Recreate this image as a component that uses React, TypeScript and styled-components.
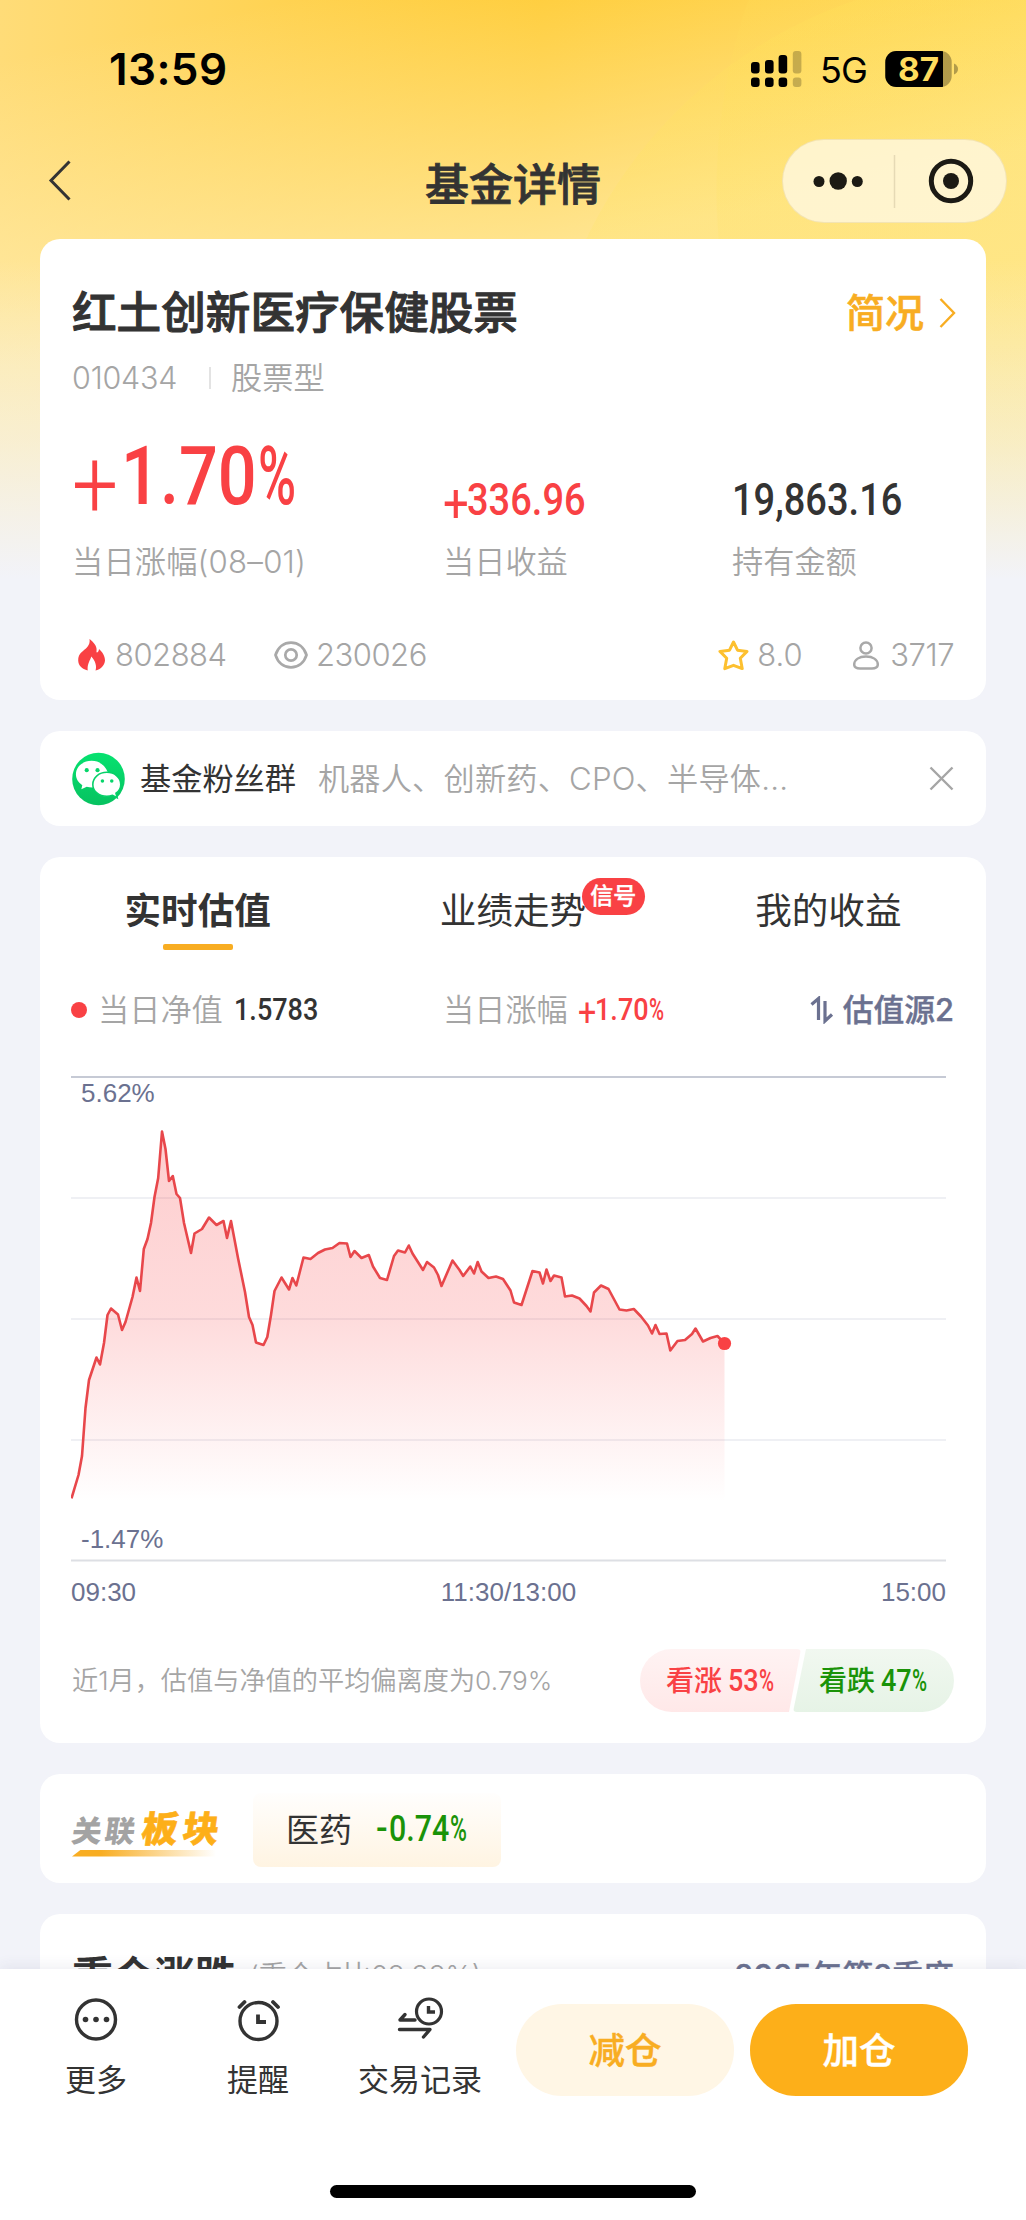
import React from "react";
import styled, { createGlobalStyle, css } from "styled-components";

const GlobalStyle = createGlobalStyle`
  * { box-sizing: border-box; }
  body { margin: 0; font-family: Inter, "Noto Sans CJK SC", sans-serif; color: #333; }
  svg { display: block; flex: none; }
`;

const c = {
  red: "#f94144",
  line: "#e8474b",
  grey: "#a5a5a5",
  slate: "#6b7190",
  amber: "#f8ad22",
  orange: "#fdaf19",
  green: "#1a9308",
  ink: "#333333",
};

const Page = styled.div`
  width: 1026px;
  height: 2220px;
  display: flex;
  flex-direction: column;
  overflow: hidden;
  background-color: #f2f3f9;
  background-image:
    linear-gradient(180deg, rgba(242, 243, 249, 0) 0px, rgba(242, 243, 249, 0) 260px, rgba(242, 243, 249, 0.5) 440px, #f2f3f9 580px),
    radial-gradient(circle 465px at 1005px 440px, rgba(255, 230, 90, 0.19) 99.8%, transparent 100%),
    radial-gradient(circle 585px at 1301px 190px, rgba(255, 224, 90, 0.15) 99.8%, transparent 100%),
    linear-gradient(168deg, rgba(255, 240, 190, 0) 60px, rgba(255, 240, 185, 0.7) 360px, rgba(255, 240, 190, 0.8) 600px),
    linear-gradient(90deg, #ffdc78 0px, #ffca30 540px, #ffcc32 1026px);
`;

const StatusBar = styled.header`
  height: 116px;
  flex: none;
  display: flex;
  align-items: center;
  padding: 21px 67px 0 109px;
  color: #000;
`;

const Clock = styled.div`
  font-size: 44px;
  font-weight: 600;
  line-height: 44px;
  letter-spacing: 0.4px;
  margin-right: auto;
`;

const Network = styled.div`
  font-size: 36px;
  line-height: 36px;
  margin: 3px 18px 0 18px;
  width: 47px;
  letter-spacing: -0.8px;
`;

const NavBar = styled.nav`
  height: 123px;
  flex: none;
  display: grid;
  grid-template-columns: 244px 1fr 244px;
  padding: 0 19px 0 19px;
`;

const NavBack = styled.div`
  padding: 44px 0 0 29px;
`;

const NavTitle = styled.h1`
  margin: 0;
  font-size: 44px;
  font-weight: 500;
  line-height: 138px;
  text-align: center;
  -webkit-text-stroke: 0.8px currentColor;
`;

const Capsule = styled.div`
  justify-self: end;
  margin-top: 23px;
  width: 225px;
  height: 84px;
  border-radius: 42px;
  border: 1px solid rgba(200, 170, 80, 0.22);
  background: rgba(255, 249, 228, 0.78);
  display: flex;
  align-items: center;
`;

const Content = styled.main`
  flex: none;
  height: 1730px;
  overflow: hidden;
  padding: 0 40px;
  display: flex;
  flex-direction: column;
  gap: 31px;
`;

const Card = styled.section<{ $h: number }>`
  flex: none;
  height: ${(p) => p.$h}px;
  border-radius: 20px;
  background: #fff;
  padding: 0 32px;
`;

const Row = styled.div<{ $h: number; $mt?: number }>`
  height: ${(p) => p.$h}px;
  margin-top: ${(p) => p.$mt ?? 0}px;
  display: flex;
  align-items: center;
`;

const Spacer = styled.div`
  flex: 1;
`;

const FundName = styled.h2`
  margin: 0;
  font-size: 44.6px;
  line-height: 64px;
  font-weight: 500;
  white-space: nowrap;
  -webkit-text-stroke: 1px currentColor;
`;

const ProfileLink = styled.div`
  display: flex;
  align-items: center;
  gap: 15px;
  margin-right: -2px;
  font-size: 39px;
  line-height: 64px;
  font-weight: 500;
  color: ${c.amber};
  -webkit-text-stroke: 0.6px currentColor;
`;

const Muted = styled.span<{ $size?: number; $w?: number; $ls?: number }>`
  color: ${c.grey};
  font-size: ${(p) => p.$size ?? 31.2}px;
  line-height: 32px;
  font-weight: 350;
  white-space: nowrap;
  letter-spacing: ${(p) => p.$ls ?? 0}px;
  ${(p) => p.$w && css`width: ${p.$w}px;`}
`;

const Divider = styled.i`
  width: 2px;
  height: 22px;
  margin: 0 20px 0 32px;
  background: #e3e3e3;
`;

const Metrics = styled.div`
  margin-top: 42px;
  display: grid;
  grid-template-columns: 371px 289px 1fr;
`;

const Metric = styled.div`
  display: flex;
  flex-direction: column;
  gap: 20px;
`;

const MetricValue = styled.div<{ $drop: number }>`
  height: 90px;
  display: flex;
  align-items: flex-end;
  padding-bottom: ${(p) => p.$drop}px;
`;

const Figures = styled.span<{ $size: number; $color: string }>`
  display: flex;
  font-family: Roboto, sans-serif;
  font-size: ${(p) => p.$size}px;
  line-height: 0.72em;
  height: 0.72em;
  font-weight: 500;
  color: ${(p) => p.$color};
  white-space: nowrap;
`;

const FigurePart = styled.span<{ $w: number; $sx: number }>`
  flex: none;
  width: ${(p) => p.$w}em;
  transform: scaleX(${(p) => p.$sx});
  transform-origin: left center;
`;

const Sign = styled(FigurePart)<{ $plus: boolean; $thin: boolean }>`
  font-weight: ${(p) => (p.$thin ? 300 : 400)};
  ${(p) =>
    p.$plus
      ? css`
          span {
            display: block;
            font-size: 1.2em;
            line-height: 0.6em;
            transform: translateY(0.083em);
          }
        `
      : css`
          font-weight: 500;
        `}
`;

const GroupName = styled.span`
  font-size: 31.2px;
  line-height: 32px;
  margin: 0 22px 0 15px;
`;

const Tabs = styled.div`
  display: grid;
  grid-template-columns: repeat(3, 1fr);
  margin: 0 -32px;
  height: 106px;
`;

const Tab = styled.div<{ $active?: boolean }>`
  display: flex;
  align-items: center;
  justify-content: center;
  padding-top: 2px;
  font-size: 36.6px;
  line-height: 40px;
  font-weight: ${(p) => (p.$active ? 700 : 400)};
  ${(p) =>
    p.$active &&
    css`
      position: relative;
      &::after {
        content: "";
        position: absolute;
        left: calc(50% - 35px);
        top: 87px;
        width: 70px;
        height: 6px;
        border-radius: 2px;
        background: ${c.amber};
      }
    `}
`;

const TabLabel = styled.span`
  position: relative;
`;

const SignalBadge = styled.span`
  position: absolute;
  left: 142px;
  top: -13px;
  width: 63px;
  height: 37px;
  border-radius: 19px;
  background: ${c.red};
  color: #fff;
  font-size: 23px;
  font-weight: 500;
  line-height: 37px;
  text-align: center;
  -webkit-text-stroke: 0.4px currentColor;
`;

const Dot = styled.i`
  width: 16px;
  height: 16px;
  border-radius: 50%;
  background: ${c.red};
  margin: 0 11px 0 -1px;
`;

const Legend = styled.div<{ $w?: number; $gap: number; $pl?: number }>`
  display: flex;
  align-items: center;
  gap: ${(p) => p.$gap}px;
  padding-left: ${(p) => p.$pl ?? 0}px;
  ${(p) => p.$w && css`width: ${p.$w}px;`}
`;

const Source = styled.div`
  display: flex;
  align-items: center;
  gap: 9px;
  color: ${c.slate};
  font-size: 30.8px;
  line-height: 32px;
  font-weight: 500;
  -webkit-text-stroke: 0.4px currentColor;
`;

const ChartBox = styled.div`
  margin: 46px 0 0 -1px;
  height: 486px;
`;

const Axis = styled.div`
  margin: 15px 8px 0 -1px;
  height: 30px;
  display: grid;
  grid-template-columns: 1fr auto 1fr;
  align-items: center;
  font-family: "Liberation Sans", sans-serif;
  font-size: 26px;
  line-height: 30px;
  color: ${c.slate};
  & > :last-child { text-align: right; }
`;

const Forecast = styled.div`
  display: flex;
`;

const Side = styled.div<{ $up?: boolean }>`
  height: 63px;
  display: flex;
  align-items: center;
  gap: 6px;
  font-size: 28px;
  line-height: 32px;
  font-weight: 500;
  ${(p) =>
    p.$up
      ? css`
          width: 161px;
          padding-left: 26px;
          color: ${c.red};
          border-radius: 32px 4px 4px 32px;
          background: linear-gradient(180deg, #fff3f3, #ffe8e8);
          clip-path: polygon(0 0, 100% 0, 149px 100%, 0 100%);
        `
      : css`
          width: 161px;
          margin-left: -8px;
          padding-left: 26px;
          color: ${c.green};
          border-radius: 4px 32px 32px 4px;
          background: linear-gradient(180deg, #f1f8f0, #e6f3e6);
          clip-path: polygon(13px 0, 100% 0, 100% 100%, 0 100%);
        `}
`;

const SectorLogo = styled.div`
  width: 148px;
  margin-top: 11px;
  display: flex;
  flex-direction: column;
`;

const SectorWords = styled.div`
  display: flex;
  align-items: baseline;
  gap: 4px;
  font-weight: 900;
  white-space: nowrap;
  line-height: 34px;
`;

const Slanted = styled.span<{ $size: number; $color: string; $ls: number; $stroke: number }>`
  font-size: ${(p) => p.$size}px;
  color: ${(p) => p.$color};
  letter-spacing: ${(p) => p.$ls}px;
  transform: skewX(-8deg);
  -webkit-text-stroke: ${(p) => p.$stroke}px currentColor;
`;

const Swoosh = styled.i`
  height: 7px;
  width: 144px;
  margin-top: 2px;
  background: linear-gradient(90deg, ${c.amber} 20%, rgba(248, 173, 34, 0));
  clip-path: polygon(9px 0, 100% 0, 100% 100%, 0 100%);
`;

const SectorTag = styled.div`
  width: 248px;
  height: 74px;
  margin: 2px 0 0 33px;
  padding: 0 0 0 33px;
  border-radius: 8px;
  display: flex;
  align-items: center;
  gap: 24px;
  font-size: 33px;
  line-height: 36px;
  background: linear-gradient(180deg, #fffefd, #fff4e2);
`;

const HoldingsTitle = styled.span`
  font-size: 41px;
  line-height: 44px;
  font-weight: 700;
`;

const Quarter = styled.span`
  font-size: 30.9px;
  line-height: 32px;
  font-weight: 500;
  color: ${c.slate};
  -webkit-text-stroke: 0.4px currentColor;
`;

const Footer = styled.footer`
  flex: 1;
  background: #fff;
  box-shadow: 0 -2px 14px rgba(60, 60, 100, 0.09);
  display: flex;
  flex-direction: column;
  align-items: center;
  z-index: 1;
`;

const Actions = styled.div`
  width: 100%;
  height: 216px;
  padding-left: 15px;
  display: flex;
`;

const Action = styled.div`
  flex: none;
  width: 162px;
  padding-top: 26px;
  display: flex;
  flex-direction: column;
  align-items: center;
  gap: 21px;
  font-size: 31px;
  line-height: 32px;
`;

const TradeButtons = styled.div`
  display: flex;
  gap: 16px;
  margin: 35px 0 0 15px;
`;

const TradeButton = styled.button<{ $solid?: boolean }>`
  flex: none;
  width: 218px;
  height: 92px;
  padding: 0;
  border: 0;
  border-radius: 46px;
  font-family: inherit;
  font-size: 36.5px;
  line-height: 94px;
  font-weight: 500;
  -webkit-text-stroke: 0.4px currentColor;
  color: ${(p) => (p.$solid ? "#fff" : c.amber)};
  background: ${(p) => (p.$solid ? c.orange : "#fff6e5")};
`;

const HomeIndicator = styled.div`
  width: 366px;
  height: 13px;
  border-radius: 7px;
  background: #000;
`;

const DIGIT_EM = 0.566;
const POINT_EM = 0.276;
const BODY_SCALE = 0.845;

/* Condensed number: sign, digits and percent mark are each narrowed on their own. */
const Num = ({ value, size, color = c.ink }: { value: string; size: number; color?: string }) => {
  const sign = /^[+-]/.test(value) ? value[0] : "";
  const percent = value.endsWith("%");
  const body = value.slice(sign ? 1 : 0, percent ? -1 : undefined);
  const em = [...body].reduce((sum, ch) => sum + (/\d/.test(ch) ? DIGIT_EM : POINT_EM), 0);
  return (
    <Figures $size={size} $color={color}>
      {sign && (
        <Sign $w={sign === "+" ? (size > 60 ? 0.61 : 0.54) : 0.37} $sx={sign === "+" ? 0.84 : 0.95} $plus={sign === "+"} $thin={size > 60}>
          <span>{sign}</span>
        </Sign>
      )}
      <FigurePart $w={em * BODY_SCALE + 0.02} $sx={BODY_SCALE}>{body}</FigurePart>
      {percent && <FigurePart $w={0.47} $sx={0.64}>%</FigurePart>}
    </Figures>
  );
};

const SignalIcon = () => (
  <svg width="52" height="38" viewBox="750 49 52 38">
    <g fill="#000">
      <rect x="751" y="61" width="8.6" height="11.5" rx="3" />
      <rect x="765" y="59" width="8.6" height="13.5" rx="3" />
      <rect x="778.6" y="54" width="8.6" height="18.5" rx="3" />
      <rect x="751" y="76.5" width="8.6" height="9.5" rx="3" />
      <rect x="765" y="76.5" width="8.6" height="9.5" rx="3" />
      <rect x="778.6" y="76.5" width="8.6" height="9.5" rx="3" />
      <g opacity="0.22">
        <rect x="792.8" y="50" width="8.6" height="22.5" rx="3" />
        <rect x="792.8" y="76.5" width="8.6" height="9.5" rx="3" />
      </g>
    </g>
  </svg>
);

const BatteryIcon = () => (
  <svg width="74" height="38" viewBox="884 49 74 38">
    <clipPath id="charge"><rect x="884" y="49" width="58" height="38" /></clipPath>
    <rect x="884.3" y="50" width="66.4" height="36" rx="11" fill="#000" opacity="0.3" />
    <rect x="884.3" y="50" width="66.4" height="36" rx="11" fill="#000" clipPath="url(#charge)" />
    <path d="M953 62.5 Q957 64.5 957 68 Q957 71.5 953 73.5 Z" fill="#000" opacity="0.3" />
    <text x="917.5" y="80" textAnchor="middle" fontFamily="Inter, sans-serif" fontWeight="700" fontSize="33" textLength="41" lengthAdjust="spacingAndGlyphs" fill="#ffdc5e">87</text>
  </svg>
);

const points: [number, number][] = [
  [71.5, 1498.5], [78.5, 1475], [82, 1456], [85.5, 1408], [89, 1380], [96.5, 1357.5], [100, 1364.5], [104, 1343],
  [107.5, 1315], [111, 1308.5], [118, 1314.5], [122, 1330], [125.5, 1322], [132.5, 1297], [136.5, 1277.5],
  [140, 1291], [143.8, 1249], [147.5, 1239], [151, 1223], [154.5, 1197], [158.2, 1178], [162, 1131.5], [165.5, 1149],
  [169, 1181], [172.8, 1176], [176.5, 1194], [180, 1198], [184, 1223], [191, 1253], [194.5, 1233.5], [202, 1229],
  [209, 1217.5], [216.5, 1225], [223.5, 1221], [227, 1238], [231, 1221], [238, 1258], [245, 1292], [249, 1317],
  [252.5, 1325], [256, 1342.5], [263.5, 1345], [267.3, 1337], [271, 1315], [274.5, 1291], [281.5, 1277.5],
  [289, 1289.5], [292.5, 1278], [296.3, 1285.5], [303.5, 1257.5], [310.5, 1259], [318, 1253], [325, 1249.5],
  [332.5, 1248], [339.5, 1243], [347, 1243.5], [350.5, 1257], [354.5, 1251], [361.5, 1258], [368.8, 1255],
  [373, 1266.5], [380, 1278], [387, 1280], [394, 1256], [398, 1250.5], [405, 1252.5], [408.8, 1245.5], [412.5, 1253.5],
  [423, 1270], [427, 1262], [434, 1267.5], [438, 1275], [441.5, 1286], [452.5, 1260.5], [459.5, 1270], [463.2, 1276],
  [470.3, 1266.5], [474, 1273.5], [477.7, 1262], [481.5, 1271.5], [488.5, 1278], [496, 1276.5], [503, 1279],
  [510.5, 1290.5], [514, 1302.5], [521.5, 1305], [532.5, 1271], [539.5, 1272.5], [543, 1283.5], [546.5, 1269.5],
  [550.5, 1281], [554, 1275.5], [561.5, 1277.5], [565, 1296.5], [572, 1295.5], [579.5, 1298.5], [586.5, 1306],
  [590.5, 1311.5], [594, 1292.5], [601, 1285.5], [608.5, 1289], [619.5, 1309.5], [626.5, 1310.5], [633.8, 1309],
  [641, 1316.5], [648, 1325.5], [652, 1333.5], [655.5, 1325], [659.5, 1334], [666.5, 1333.5], [670.3, 1350.5],
  [677.5, 1341], [685, 1340], [692, 1334], [695.5, 1328.5], [703, 1341.5], [710.5, 1338], [717.5, 1336], [724.5, 1343.5],
];

const Chart = () => {
  const path = points.map(([x, y], i) => `${i ? "L" : "M"}${x} ${y}`).join("");
  return (
    <svg width="876" height="486" viewBox="71 1076 876 486" fontFamily="'Liberation Sans', sans-serif" fontSize="26" fill={c.slate}>
      <defs>
        <linearGradient id="area" gradientUnits="userSpaceOnUse" x1="0" y1="1131" x2="0" y2="1502">
          <stop offset="0" stopColor="#f94144" stopOpacity="0.26" />
          <stop offset="0.5" stopColor="#f94144" stopOpacity="0.19" />
          <stop offset="1" stopColor="#f94144" stopOpacity="0" />
        </linearGradient>
      </defs>
      <g strokeWidth="2">
        <path d="M71 1077H946" stroke="#c6cad5" />
        <path d="M71 1198H946M71 1319H946M71 1440H946" stroke="#eff0f4" />
        <path d="M71 1560.5H946" stroke="#dddfe4" />
      </g>
      <path d={`${path}V1502H71.5Z`} fill="url(#area)" />
      <path d={path} fill="none" stroke={c.line} strokeWidth="2.6" strokeLinejoin="round" />
      <circle cx="724.5" cy="1343.5" r="6.6" fill={c.red} />
      <text x="81" y="1102">5.62%</text>
      <text x="81" y="1547.5">-1.47%</text>
    </svg>
  );
};

const FlameIcon = () => (
  <svg width="27" height="32" viewBox="0 0 27 32">
    <path fill={c.red} d="M11.5 0C14 2 18 5.5 18.5 9.5C18.8 11.5 18.2 13 18.8 13.4C20 13.8 21 11.5 21 10C24.5 13 27 17 27 21.5C26.7 26.5 22.5 30.5 17.5 31.5C19 27.5 17.5 22 13.3 17.5C12.5 21 9 24.5 9.7 31.5C4 30 .3 26.5 .2 21.5C0 14 5.5 12.5 9.5 7.8C11.3 5.5 12 3 11.5 0Z" />
  </svg>
);

const EyeIcon = () => (
  <svg width="34" height="28" viewBox="0 0 34 28" fill="none" stroke="#a9a9a9" strokeWidth="2.7">
    <path d="M1.5 14C4 6 10 1.6 17 1.6S30 6 32.5 14C30 22 24 26.4 17 26.4S4 22 1.5 14Z" />
    <circle cx="17" cy="14" r="5.7" />
  </svg>
);

const StarIcon = () => (
  <svg width="31" height="31" viewBox="0 0 31 31" fill="none" stroke="#fdc02f" strokeWidth="3" strokeLinejoin="round">
    <path d="M15.5 2L19.5 10.2L29 11.4L22.3 18.2L24.2 28.6L15.5 25.3L6.8 28.6L8.7 18.2L2 11.4L11.5 10.2Z" />
  </svg>
);

const PersonIcon = () => (
  <svg width="26" height="29" viewBox="0 0 26 29" fill="none" stroke="#a9a9a9" strokeWidth="2.5">
    <circle cx="13" cy="7" r="5.6" />
    <path d="M7 27.5C2.5 27.5 1.2 25.8 1.2 23.5C1.5 18.5 6 15.6 13 15.6S24.5 18.5 24.8 23.5C24.8 25.8 23.5 27.5 19 27.5Z" />
  </svg>
);

const WechatIcon = () => (
  <svg width="53" height="54" viewBox="0 0 54 54">
    <defs>
      <linearGradient id="wx" x1="0" y1="0" x2="0" y2="1">
        <stop offset="0" stopColor="#06e270" />
        <stop offset="1" stopColor="#07c260" />
      </linearGradient>
    </defs>
    <circle cx="27" cy="27" r="26.8" fill="url(#wx)" />
    <path fill="#fff" d="M20 8.5C11 8.5 4 14.5 4 22.2C4 27 6.5 30.5 10.5 33.3L9.5 37.5L15 34.8Q18 35.7 22 35.5L36.5 20C34 13.5 28 8.5 20 8.5Z" />
    <path fill="#fff" stroke="#06d068" strokeWidth="1.6" d="M35.5 20.2C27.5 20.2 21.2 25.6 21.2 32.5S27.5 44.6 35.5 44.6Q38.5 44.6 41.3 43.6L46 46L44.8 41.5C48 39.2 49.7 36 49.7 32.5C49.7 25.6 43.5 20.2 35.5 20.2Z" />
    <g fill="#06d56a">
      <circle cx="15" cy="18" r="2.1" />
      <circle cx="26" cy="18" r="2.1" />
      <circle cx="31" cy="29" r="1.8" />
      <circle cx="40.5" cy="29" r="1.8" />
    </g>
  </svg>
);

const SwapIcon = () => (
  <svg width="24" height="28" viewBox="0 0 24 28" fill="none" stroke={c.slate} strokeWidth="3.2">
    <path d="M1.5 8.5L8.5 2.5V24" />
    <path d="M15 5V25L22 18.5" />
  </svg>
);

const MoreIcon = () => (
  <svg width="48" height="48" viewBox="0 0 48 48">
    <circle cx="24" cy="24.5" r="19.5" fill="none" stroke={c.ink} strokeWidth="3.4" />
    <g fill={c.ink}>
      <circle cx="13.5" cy="24.5" r="2.8" />
      <circle cx="24" cy="24.5" r="2.8" />
      <circle cx="34.5" cy="24.5" r="2.8" />
    </g>
  </svg>
);

const AlarmIcon = () => (
  <svg width="48" height="48" viewBox="0 0 48 48" fill="none" stroke={c.ink} strokeWidth="3.4" strokeLinecap="round" strokeLinejoin="round">
    <circle cx="24.5" cy="26" r="18.5" />
    <path d="M5.5 12L10.5 7M39 7L44 12" strokeWidth="3.8" />
    <path d="M24 19.5V27H32" strokeWidth="3.8" strokeLinecap="butt" strokeLinejoin="miter" />
  </svg>
);

const TradeIcon = () => (
  <svg width="48" height="48" viewBox="0 0 48 48" fill="none" stroke={c.ink} strokeWidth="3.4" strokeLinecap="round" strokeLinejoin="round">
    <circle cx="33" cy="16.5" r="12.5" strokeWidth="3.2" />
    <path d="M32.5 11V17H39" strokeLinecap="butt" strokeLinejoin="miter" />
    <path d="M19 25H4L9 19.5" />
    <path d="M3.5 34.5H34L27.5 42" />
  </svg>
);

export default function App() {
  return (
    <Page>
      <GlobalStyle />
      <StatusBar>
        <Clock>13:59</Clock>
        <SignalIcon />
        <Network>5G</Network>
        <BatteryIcon />
      </StatusBar>
      <NavBar>
        <NavBack>
          <svg width="24" height="41" viewBox="0 0 24 41" fill="none" stroke={c.ink} strokeWidth="3">
            <path d="M21.5 1.5L3 20.5L21.5 39.5" />
          </svg>
        </NavBack>
        <NavTitle>基金详情</NavTitle>
        <Capsule>
          <svg width="223" height="82" viewBox="783 140 223 82" fill="#1c1a14">
            <circle cx="819" cy="181.5" r="5.5" />
            <circle cx="838.2" cy="181" r="8.7" />
            <circle cx="857.3" cy="181.5" r="5.5" />
            <path d="M894.5 155V208" stroke="#e6dab5" strokeWidth="1.5" />
            <circle cx="951" cy="181" r="19.7" fill="none" stroke="#1c1a14" strokeWidth="5" />
            <circle cx="951" cy="181" r="8" />
          </svg>
        </Capsule>
      </NavBar>

      <Content>
        <Card $h={461}>
          <Row $h={64} $mt={42}>
            <FundName>红土创新医疗保健股票</FundName>
            <Spacer />
            <ProfileLink>
              简况
              <svg width="17" height="30" viewBox="0 0 17 30" fill="none" stroke={c.amber} strokeWidth="2.4">
                <path d="M1.5 1L15 15L1.5 29" />
              </svg>
            </ProfileLink>
          </Row>
          <Row $h={32} $mt={17}>
            <Muted $size={30.5} $w={105} $ls={-0.2}>010434</Muted>
            <Divider />
            <Muted>股票型</Muted>
          </Row>
          <Metrics>
            <Metric>
              <MetricValue $drop={20}>
                <Num size={81} color={c.red} value="+1.70%" />
              </MetricValue>
              <Muted $ls={0.2}>当日涨幅(08–01)</Muted>
            </Metric>
            <Metric>
              <MetricValue $drop={10}>
                <Num size={45} color={c.red} value="+336.96" />
              </MetricValue>
              <Muted>当日收益</Muted>
            </Metric>
            <Metric>
              <MetricValue $drop={10}>
                <Num size={45} value="19,863.16" />
              </MetricValue>
              <Muted>持有金额</Muted>
            </Metric>
          </Metrics>
          <Row $h={40} $mt={57}>
            <Legend $gap={10} $w={202} $pl={6}>
              <FlameIcon />
              <Muted $size={31} $ls={-0.5}>802884</Muted>
            </Legend>
            <Legend $gap={8}>
              <EyeIcon />
              <Muted $size={31} $ls={-0.5}>230026</Muted>
            </Legend>
            <Spacer />
            <Legend $gap={8} $w={135}>
              <StarIcon />
              <Muted $size={31}>8.0</Muted>
            </Legend>
            <Legend $gap={11}>
              <PersonIcon />
              <Muted $size={31} $ls={-0.5}>3717</Muted>
            </Legend>
          </Row>
        </Card>

        <Card $h={95}>
          <Row $h={95}>
            <WechatIcon />
            <GroupName>基金粉丝群</GroupName>
            <Muted $ls={0.2}>机器人、创新药、CPO、半导体...</Muted>
            <Spacer />
            <svg width="25" height="25" viewBox="0 0 25 25" stroke="#a5a5a5" strokeWidth="2.4">
              <path d="M1.5 1.5L23.5 23.5M23.5 1.5L1.5 23.5" />
            </svg>
          </Row>
        </Card>

        <Card $h={886}>
          <Tabs>
            <Tab $active>实时估值</Tab>
            <Tab>
              <TabLabel>
                业绩走势
                <SignalBadge>信号</SignalBadge>
              </TabLabel>
            </Tab>
            <Tab>我的收益</Tab>
          </Tabs>
          <Row $h={40} $mt={27}>
            <Legend $gap={0} $w={371}>
              <Dot />
              <Muted $w={136}>当日净值</Muted>
              <Num size={32} value="1.5783" />
            </Legend>
            <Legend $gap={0}>
              <Muted $w={135}>当日涨幅</Muted>
              <Num size={32} color={c.red} value="+1.70%" />
            </Legend>
            <Spacer />
            <Source>
              <SwapIcon />
              估值源2
            </Source>
          </Row>
          <ChartBox>
            <Chart />
          </ChartBox>
          <Axis>
            <span>09:30</span>
            <span>11:30/13:00</span>
            <span>15:00</span>
          </Axis>
          <Row $h={63} $mt={42}>
            <Muted $size={26.2}>近1月，估值与净值的平均偏离度为0.79%</Muted>
            <Spacer />
            <Forecast>
              <Side $up>
                看涨
                <Num size={32} color={c.red} value="53%" />
              </Side>
              <Side>
                看跌
                <Num size={32} color={c.green} value="47%" />
              </Side>
            </Forecast>
          </Row>
        </Card>

        <Card $h={109}>
          <Row $h={109}>
            <SectorLogo>
              <SectorWords>
                <Slanted $size={30} $color="#a3a3a3" $ls={3} $stroke={0}>关联</Slanted>
                <Slanted $size={36} $color={c.orange} $ls={5} $stroke={0.6}>板块</Slanted>
              </SectorWords>
              <Swoosh />
            </SectorLogo>
            <SectorTag>
              医药
              <Num size={36} color={c.green} value="-0.74%" />
            </SectorTag>
          </Row>
        </Card>

        <Card $h={200}>
          <Row $h={44} $mt={40}>
            <HoldingsTitle>重仓涨跌</HoldingsTitle>
            <Legend $gap={0} $w={13} />
            <Muted $size={28}>(重仓占比68.88%)</Muted>
            <Spacer />
            <Quarter>2025年第2季度</Quarter>
          </Row>
        </Card>
      </Content>

      <Footer>
        <Actions>
          <Action>
            <MoreIcon />
            更多
          </Action>
          <Action>
            <AlarmIcon />
            提醒
          </Action>
          <Action>
            <TradeIcon />
            交易记录
          </Action>
          <TradeButtons>
            <TradeButton>减仓</TradeButton>
            <TradeButton $solid>加仓</TradeButton>
          </TradeButtons>
        </Actions>
        <HomeIndicator />
      </Footer>
    </Page>
  );
}
